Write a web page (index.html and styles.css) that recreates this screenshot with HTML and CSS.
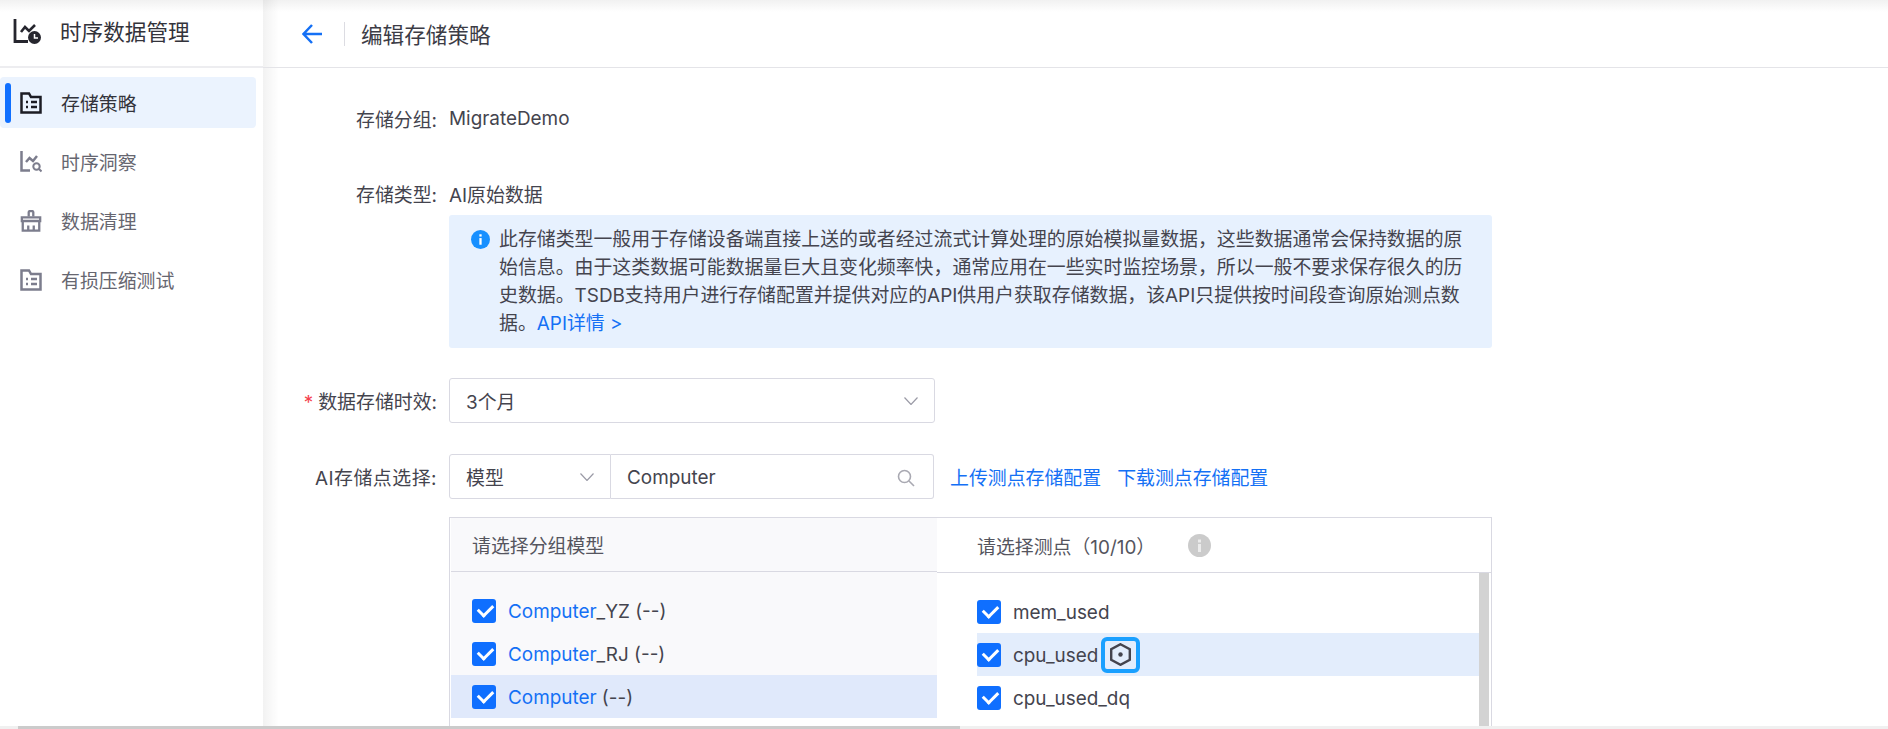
FILE: index.html
```html
<!DOCTYPE html>
<html lang="zh-CN">
<head>
    <meta charset="UTF-8">
    <meta name="viewport" content="width=device-width, initial-scale=1.0">
    <title>编辑存储策略</title>
    <link rel="stylesheet" href="styles.css">
</head>
<body>
    <div class="app">
        <!-- 左侧菜单 -->
        <aside class="sidebar">
            <div class="logo">
                <svg class="logo-icon" viewBox="0 0 28 25" fill="none" stroke="#26262e" stroke-width="2.8">
                    <path d="M2 0V22.5H15"/>
                    <path d="M8 13L12 8L16 12L22 6" stroke-width="2.6"/>
                    <circle cx="21.5" cy="18.5" r="6.5" fill="#26262e" stroke="none"/>
                    <path d="M21.5 15V19H25" stroke="#fff" stroke-width="1.5"/>
                </svg>
                <span>时序数据管理</span>
            </div>
            <nav class="menu">
                <a class="menu-item active">
                    <svg class="menu-icon" viewBox="0 0 22 22" fill="none" stroke="currentColor" stroke-width="2.5">
                        <path d="M1.5 1.5H9L11 5H20.5V20.5H1.5Z"/>
                        <path d="M6 10H8M6 15H8M11 10H17M11 15H17"/>
                    </svg>
                    <span>存储策略</span>
                </a>
                <a class="menu-item">
                    <svg class="menu-icon" viewBox="0 0 22 22" fill="none" stroke="currentColor" stroke-width="2.5">
                        <path d="M1.5 0V19.5H10"/>
                        <path d="M6 11L9.5 7L13 10L17 5"/>
                        <circle cx="16.5" cy="15.5" r="3.2" stroke-width="2"/>
                        <path d="M19 18L21.5 20.5" stroke-width="2"/>
                    </svg>
                    <span>时序洞察</span>
                </a>
                <a class="menu-item">
                    <svg class="menu-icon" viewBox="0 0 22 24" fill="none" stroke="currentColor" stroke-width="2.5">
                        <path d="M8.5 7V2.5C8.5 .5 13.5 .5 13.5 2.5V7"/>
                        <path d="M1 8H21V12H1Z"/>
                        <path d="M2 12V22.5H20V12"/>
                        <path d="M8 23V17M14 23V17"/>
                    </svg>
                    <span>数据清理</span>
                </a>
                <a class="menu-item">
                    <svg class="menu-icon" viewBox="0 0 22 22" fill="none" stroke="currentColor" stroke-width="2.5">
                        <path d="M1.5 1.5H9L11 5H20.5V20.5H1.5Z"/>
                        <path d="M6 10H8M6 15H8M11 10H17M11 15H17"/>
                    </svg>
                    <span>有损压缩测试</span>
                </a>
            </nav>
        </aside>

        <main class="main">
            <header class="topbar">
                <svg class="back" viewBox="0 0 20 20" fill="none" stroke="#1470f5" stroke-width="2.5">
                    <path d="M20 10H1.5M10 1L1.5 10L10 19"/>
                </svg>
                <span class="divider"></span>
                <h1>编辑存储策略</h1>
            </header>

            <form class="form">
                <div class="row row-text first">
                    <label>存储分组:</label>
                    <span>MigrateDemo</span>
                </div>
                <div class="row row-text second">
                    <label>存储类型:</label>
                    <span>AI原始数据</span>
                </div>

                <div class="notice">
                    <svg class="notice-icon" viewBox="0 0 20 20">
                        <circle cx="10" cy="10" r="10" fill="#1890ff"/>
                        <rect x="8.8" y="8.5" width="2.4" height="7" fill="#fff"/>
                        <rect x="8.8" y="4.5" width="2.4" height="2.4" fill="#fff"/>
                    </svg>
                    <p>此存储类型一般用于存储设备端直接上送的或者经过流式计算处理的原始模拟量数据，这些数据通常会保持数据的原始信息。由于这类数据可能数据量巨大且变化频率快，通常应用在一些实时监控场景，所以一般不要求保存很久的历史数据。TSDB支持用户进行存储配置并提供对应的API供用户获取存储数据，该API只提供按时间段查询原始测点数据。<a class="link">API详情 &gt;</a></p>
                </div>

                <div class="row row-select">
                    <label><i class="star">*</i>数据存储时效:</label>
                    <div class="select wide">
                        <span>3个月</span>
                        <svg class="chevron" viewBox="0 0 14 8" fill="none" stroke="#9a9aa6" stroke-width="1.2"><path d="M.5 .5L7 7.5L13.5 .5"/></svg>
                    </div>
                </div>

                <div class="row row-select search-row">
                    <label>AI存储点选择:</label>
                    <div class="search-group">
                        <div class="select narrow">
                            <span>模型</span>
                            <svg class="chevron" viewBox="0 0 14 8" fill="none" stroke="#9a9aa6" stroke-width="1.2"><path d="M.5 .5L7 7.5L13.5 .5"/></svg>
                        </div>
                        <div class="search-input">
                            <span>Computer</span>
                            <svg class="search-icon" viewBox="0 0 18 18" fill="none" stroke="#a9a9b2" stroke-width="1.6">
                                <circle cx="7.5" cy="7.5" r="6"/><path d="M12 12L17 17"/>
                            </svg>
                        </div>
                    </div>
                    <a class="link upload">上传测点存储配置</a>
                    <a class="link">下载测点存储配置</a>
                </div>

                <div class="transfer">
                    <section class="panel-left">
                        <div class="panel-head">请选择分组模型</div>
                        <ul class="list">
                            <li><span class="check"></span><span class="item-text"><b>Computer</b>_YZ (--)</span></li>
                            <li><span class="check"></span><span class="item-text"><b>Computer</b>_RJ (--)</span></li>
                            <li class="selected"><span class="check"></span><span class="item-text"><b>Computer</b> (--)</span></li>
                        </ul>
                    </section>
                    <section class="panel-right">
                        <div class="panel-head">
                            请选择测点（10/10）
                            <svg class="tip" viewBox="0 0 23 23">
                                <circle cx="11.5" cy="11.5" r="11.5" fill="#cbcbcb"/>
                                <rect x="10" y="10" width="3" height="8" fill="#ececec"/>
                                <rect x="10" y="5.5" width="3" height="3" fill="#ececec"/>
                            </svg>
                        </div>
                        <div class="panel-body">
                            <ul class="list">
                                <li><span class="check"></span><span class="item-text">mem_used</span></li>
                                <li class="selected"><span class="check"></span><span class="item-text">cpu_used</span>
                                    <span class="focus-box">
                                        <svg viewBox="0 0 21 23" fill="none" stroke="#44444e" stroke-width="2.4">
                                            <path d="M10.5 1.2L19.8 6.3V16.7L10.5 21.8L1.2 16.7V6.3Z"/>
                                            <circle cx="10.5" cy="11.5" r="2.2" fill="#44444e" stroke="none"/>
                                        </svg>
                                    </span>
                                </li>
                                <li><span class="check"></span><span class="item-text">cpu_used_dq</span></li>
                            </ul>
                            <div class="list-scroll"></div>
                        </div>
                    </section>
                </div>
            </form>
        </main>
    </div>

    <!-- 页面底部横向滚动条 -->
    <div class="hscroll"><div class="hscroll-thumb"></div></div>
</body>
</html>
```

FILE: styles.css
```css
* {
    box-sizing: border-box;
}

html, body {
    margin: 0;
    height: 100%;
    overflow: hidden;
}

body {
    font-family: Inter, "Noto Sans CJK SC", sans-serif;
    font-size: 18.9px;
    color: #44444e;
    background: #fff;
}

.app {
    display: flex;
    height: 729px;
    overflow: hidden;
    background: linear-gradient(#f1f1f1, #fff 12px);
}

/* 左侧菜单 */
.sidebar {
    width: 263px;
    flex-shrink: 0;
}

.logo {
    height: 68px;
    display: flex;
    align-items: center;
    padding: 0 0 6px 13px;
    font-size: 21.6px;
    color: #33333b;
    border-bottom: 2px solid #ededf0;
}

.logo-icon {
    width: 28px;
    height: 25px;
    margin: 3px 19px 0 0;
}

.menu {
    display: flex;
    flex-direction: column;
    gap: 8px;
    padding-top: 9px;
}

.menu-item {
    position: relative;
    width: 256px;
    height: 51px;
    display: flex;
    align-items: center;
    padding-left: 20px;
    border-radius: 4px;
    color: #666670;
}

.menu-item .menu-icon {
    width: 22px;
    height: 22px;
    margin-right: 19px;
    color: #7c7d8d;
}

.menu-item.active {
    background: #ebf3fe;
    color: #33333b;
}

.menu-item.active .menu-icon {
    color: #1c1c24;
}

.menu-item.active::before {
    content: "";
    position: absolute;
    left: 5px;
    top: 6px;
    width: 6px;
    height: 40px;
    border-radius: 3px;
    background: #0f6fff;
}

/* 右侧内容 */
.main {
    flex: 1;
    min-width: 0;
    background: linear-gradient(90deg, rgba(0, 0, 0, .05), rgba(0, 0, 0, 0) 16px);
}

.topbar {
    height: 68px;
    display: flex;
    align-items: center;
    padding-left: 39px;
    border-bottom: 1px solid #e4e4e8;
}

.back {
    width: 20px;
    height: 20px;
}

.divider {
    width: 1px;
    height: 24px;
    margin: 0 16px 0 22px;
    background: #dcdce2;
}

.topbar h1 {
    margin: 0;
    font-size: 21.6px;
    font-weight: 400;
    color: #3c3c46;
}

.form {
    padding-right: 396px;
}

.row {
    display: flex;
    align-items: center;
}

.row label {
    width: 186px;
    padding-right: 12px;
    flex-shrink: 0;
    text-align: right;
}

.row-text {
    height: 28px;
}

.first {
    margin-top: 36px;
}

.second {
    margin-top: 47px;
}

.notice {
    display: flex;
    height: 133px;
    margin: 8px 0 0 186px;
    padding: 11px 22px;
    background: #e7f1fe;
    border-radius: 3px;
}

.notice-icon {
    width: 19px;
    height: 19px;
    margin: 4px 9px 0 0;
    flex-shrink: 0;
}

.notice p {
    margin: 0;
    width: 970px;
    line-height: 28px;
}

.link {
    color: #1470f5;
}

.row-select {
    height: 45px;
    margin-top: 30px;
}

.search-row {
    margin-top: 31px;
}

.search-row label {
    letter-spacing: .5px;
}

.star {
    margin-right: 5px;
    color: #f5424d;
    font-style: normal;
}

.select {
    height: 45px;
    display: flex;
    align-items: center;
    justify-content: space-between;
    padding: 0 16px;
    border: 1px solid #d9d9e2;
    border-radius: 3px;
}

.select.wide {
    width: 486px;
}

.chevron {
    width: 14px;
    height: 8px;
}

.search-group {
    width: 485px;
    display: flex;
}

.select.narrow {
    width: 162px;
    border-radius: 3px 0 0 3px;
}

.search-input {
    flex: 1;
    height: 45px;
    display: flex;
    align-items: center;
    justify-content: space-between;
    padding: 2px 18px 0 16px;
    border: 1px solid #d9d9e2;
    border-left: 0;
    border-radius: 0 3px 3px 0;
}

.search-icon {
    width: 18px;
    height: 18px;
}

.upload {
    margin: 0 16px 0 16px;
}

/* 穿梭框 */
.transfer {
    display: flex;
    height: 300px;
    margin: 18px 0 0 186px;
    border: 1px solid #d9d9e2;
    border-bottom: 0;
}

.panel-left {
    width: 486px;
    margin-left: 1px;
    flex-shrink: 0;
}

.panel-left .panel-head {
    height: 54px;
    background: #f9f9fb;
    padding-left: 21px;
}

.panel-left .list {
    background: linear-gradient(#f9f9fb 146px, #fff 146px);
    padding-top: 17px;
}

.panel-right {
    flex: 1;
    min-width: 0;
}

.panel-head {
    height: 55px;
    display: flex;
    align-items: center;
    color: #55555e;
    border-bottom: 1px solid #d9d9e2;
}

.panel-right .panel-head {
    padding-left: 40px;
}

.tip {
    width: 23px;
    height: 23px;
    margin-left: 33px;
}

.panel-body {
    display: flex;
    padding-left: 40px;
}

.panel-body .list {
    flex: 1;
    padding-top: 17px;
}

.list-scroll {
    width: 10px;
    height: 200px;
    margin-right: 2px;
    background: #d3d3d3;
}

.list {
    margin: 0;
    padding: 0;
    list-style: none;
}

.list li {
    height: 43px;
    display: flex;
    align-items: center;
}

.item-text {
    padding-top: 2px;
}

.panel-left .list li {
    padding-left: 21px;
}

.panel-left .list li.selected {
    background: #e0e9fb;
}

.panel-right .list li.selected {
    background: #e3edfc;
}

.list b {
    font-weight: 400;
    color: #1470f5;
}

.check {
    position: relative;
    width: 24px;
    height: 24px;
    margin-right: 12px;
    flex-shrink: 0;
    border-radius: 3px;
    background: #0f6fff;
}

.check::after {
    content: "";
    position: absolute;
    left: 6px;
    top: 5px;
    width: 12px;
    height: 7px;
    border-left: 3px solid #fff;
    border-bottom: 3px solid #fff;
    transform: rotate(-45deg);
}

.focus-box {
    width: 39px;
    height: 36px;
    display: flex;
    align-items: center;
    justify-content: center;
    margin-left: 3px;
    border: 4px solid #1aa0ff;
    border-radius: 6px;
}

.focus-box svg {
    width: 21px;
    height: 23px;
    flex-shrink: 0;
}

.hscroll {
    position: absolute;
    left: 0;
    right: 0;
    bottom: 0;
    height: 3px;
    background: #f0f0f0;
}

.hscroll-thumb {
    width: 942px;
    height: 3px;
    margin-left: 18px;
    background: #cbcbcb;
}
```
